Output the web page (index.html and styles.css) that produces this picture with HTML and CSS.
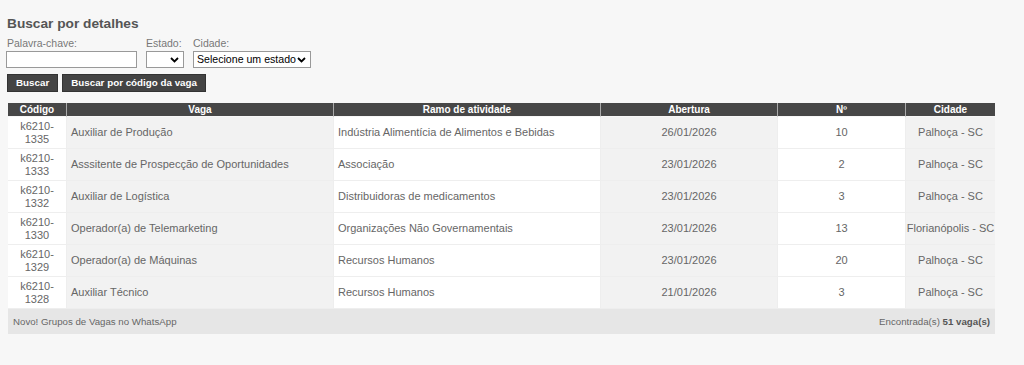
FILE: index.html
```html
<!DOCTYPE html>
<html lang="pt-BR">
<head>
<meta charset="utf-8">
<title>Buscar por detalhes</title>
<link rel="stylesheet" href="styles.css">
</head>
<body>
<div class="page">
  <h2 class="title">Buscar por detalhes</h2>
  <form class="search">
    <div class="fields">
      <div class="field">
        <label class="lbl">Palavra-chave:</label>
        <input class="inp-key" type="text">
      </div>
      <div class="field">
        <label class="lbl">Estado:</label>
        <select class="sel sel-uf"><option></option></select>
      </div>
      <div class="field">
        <label class="lbl">Cidade:</label>
        <select class="sel sel-city"><option>Selecione um estado</option></select>
      </div>
    </div>
    <div class="buttons">
      <button type="button" class="btn">Buscar</button>
      <button type="button" class="btn">Buscar por código da vaga</button>
    </div>
  </form>

  <table class="grid">
    <colgroup>
      <col class="c-cod"><col class="c-vaga"><col class="c-ramo"><col class="c-abe"><col class="c-num"><col class="c-cid">
    </colgroup>
    <thead>
      <tr><th>Código</th><th>Vaga</th><th>Ramo de atividade</th><th>Abertura</th><th>Nº</th><th>Cidade</th></tr>
    </thead>
    <tbody>
      <tr><td class="cod">k6210-<br>1335</td><td class="vaga">Auxiliar de Produção</td><td class="ramo">Indústria Alimentícia de Alimentos e Bebidas</td><td class="abe">26/01/2026</td><td class="num">10</td><td class="cid">Palhoça - SC</td></tr>
      <tr><td class="cod">k6210-<br>1333</td><td class="vaga">Asssitente de Prospecção de Oportunidades</td><td class="ramo">Associação</td><td class="abe">23/01/2026</td><td class="num">2</td><td class="cid">Palhoça - SC</td></tr>
      <tr><td class="cod">k6210-<br>1332</td><td class="vaga">Auxiliar de Logística</td><td class="ramo">Distribuidoras de medicamentos</td><td class="abe">23/01/2026</td><td class="num">3</td><td class="cid">Palhoça - SC</td></tr>
      <tr><td class="cod">k6210-<br>1330</td><td class="vaga">Operador(a) de Telemarketing</td><td class="ramo">Organizações Não Governamentais</td><td class="abe">23/01/2026</td><td class="num">13</td><td class="cid">Florianópolis - SC</td></tr>
      <tr><td class="cod">k6210-<br>1329</td><td class="vaga">Operador(a) de Máquinas</td><td class="ramo">Recursos Humanos</td><td class="abe">23/01/2026</td><td class="num">20</td><td class="cid">Palhoça - SC</td></tr>
      <tr><td class="cod">k6210-<br>1328</td><td class="vaga">Auxiliar Técnico</td><td class="ramo">Recursos Humanos</td><td class="abe">21/01/2026</td><td class="num">3</td><td class="cid">Palhoça - SC</td></tr>
    </tbody>
    <tfoot>
      <tr><td colspan="6" class="foot">
        <div class="foot-row">
          <span>Novo! Grupos de Vagas no WhatsApp</span>
          <span>Encontrada(s) <b>51 vaga(s)</b></span>
        </div>
      </td></tr>
    </tfoot>
  </table>
</div>
</body>
</html>
```

FILE: styles.css
```css
html, body {
  margin: 0;
  padding: 0;
  background: #f7f7f7;
}
body {
  font-family: "Liberation Sans", Arial, sans-serif;
  color: #666;
}
.page {
  padding: 15px 8px 0 7px;
}
.title {
  margin: 0;
  font-size: 13.7px;
  font-weight: bold;
  color: #555;
  line-height: 17px;
}
.search {
  margin: 4px 0 0;
}
.fields {
  display: flex;
  gap: 9px;
}
.field {
  display: flex;
  flex-direction: column;
}
.lbl {
  font-size: 10.5px;
  line-height: 15px;
  color: #777;
}
.inp-key {
  width: 131px;
  height: 17px;
  box-sizing: border-box;
  margin: 0 0 0 -1px;
  border: 1px solid #999;
  background: #fff;
  padding: 0 2px;
}
.sel {
  -webkit-appearance: none;
  appearance: none;
  height: 17px;
  box-sizing: border-box;
  border: 1px solid #999;
  background-color: #fff;
  background-image: url("data:image/svg+xml,%3Csvg xmlns='http://www.w3.org/2000/svg' width='9' height='6' viewBox='0 0 9 6'%3E%3Cpath d='M1 1l3.5 3.5L8 1' fill='none' stroke='%23000' stroke-width='1.8'/%3E%3C/svg%3E");
  background-repeat: no-repeat;
  background-position: right 4px center;
  font-family: "Liberation Sans", Arial, sans-serif;
  font-size: 10.6px;
  line-height: 15px;
  color: #000;
  padding: 0 14px 0 3px;
  margin: 0;
}
.sel-uf { width: 38px; }
.sel-city { width: 118px; }
.buttons {
  display: flex;
  gap: 4px;
  margin-top: 6px;
}
.btn {
  height: 18px;
  padding: 0 8px;
  border: 1px solid #333;
  background: #444;
  color: #fff;
  font-family: "Liberation Sans", Arial, sans-serif;
  font-size: 9.8px;
  font-weight: bold;
  line-height: 16px;
}
.grid {
  margin-top: 11px;
  margin-left: 1px;
  width: 987px;
  border-collapse: separate;
  border-spacing: 0;
  table-layout: fixed;
  font-size: 11px;
}
.c-cod { width: 58px; }
.c-vaga { width: 267px; }
.c-ramo { width: 267px; }
.c-abe { width: 177px; }
.c-num { width: 128px; }
.c-cid { width: 90px; }
.grid th {
  background: #474747;
  color: #fff;
  font-size: 10px;
  font-weight: bold;
  height: 13px;
  line-height: 12px;
  padding: 0;
  border-left: 1px solid #aaa;
  border-bottom: 1px solid #f7f7f7;
}
.grid th:first-child { border-left: 0; }
.grid td {
  height: 31px;
  padding: 0 4px;
  border-bottom: 1px solid #eee;
  border-left: 1px solid #eee;
  color: #666;
  line-height: 13px;
  vertical-align: middle;
}
.grid td:first-child { border-left: 0; }
.cod, .num { background: #fff; }
.ramo { background: #fff; }
.vaga, .abe, .cid { background: #f2f2f2; }
.cod, .abe, .num, .cid { text-align: center; }
.grid td.cid { padding: 0; white-space: nowrap; }
.grid td.foot {
  background: #e6e6e6;
  height: 25px;
  padding: 0 5px;
  font-size: 9.7px;
  border: 0;
  color: #666;
}
.foot-row {
  display: flex;
  justify-content: space-between;
}
.foot-row b { color: #555; }
```
